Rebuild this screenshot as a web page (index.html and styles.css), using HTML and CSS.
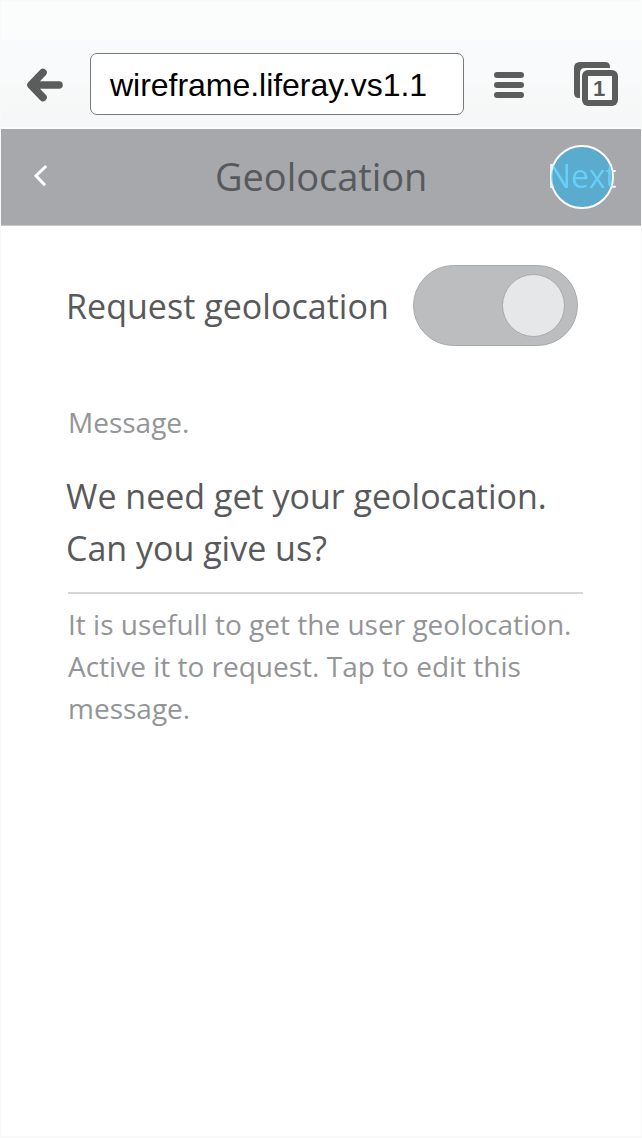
FILE: index.html
```html
<!DOCTYPE html>
<html lang="en">
<head>
<meta charset="utf-8">
<title>Geolocation</title>
<link rel="stylesheet" href="styles.css">
</head>
<body>
<div class="screen">
  <header class="browser-bar">
    <svg class="back" width="38" height="34" viewBox="0 0 38 34"><path d="M18 4.500L6 17L18 29.500M7 17H34" fill="none" stroke="#5b5d5c" stroke-width="7.600" stroke-linecap="round" stroke-linejoin="round"/></svg>
    <div class="address">wireframe.liferay.vs1.1</div>
    <svg class="menu" width="30" height="26" viewBox="0 0 30 26" fill="#5b5d5c"><rect width="30" height="6" rx="3"/><rect y="10" width="30" height="6" rx="3"/><rect y="20" width="30" height="6" rx="3"/></svg>
    <svg class="tabs" width="44" height="44" viewBox="0 0 44 44"><path d="M36 6V5Q36 0 31 0H6Q0 0 0 6V31Q0 36 5 36H6V11Q6 6 11 6Z" fill="#5b5d5c"/><rect x="8" y="8" width="36" height="36" rx="6" fill="#5b5d5c"/><rect x="14" y="14" width="24" height="24" fill="#fafbfb"/><text class="tab-count" x="25" y="34" text-anchor="middle">1</text></svg>
  </header>
  <nav class="title-bar">
    <svg class="chevron" width="16" height="24" viewBox="0 0 16 24"><path d="M14.200 2L4 11.700L13 21.300" fill="none" stroke="#fff" stroke-width="3"/></svg>
    <h1 class="title">Geolocation</h1>
    <div class="next"><span class="tap"></span><span class="next-label">Next</span></div>
  </nav>
  <main class="content">
    <div class="setting">
      <span class="setting-label">Request geolocation</span>
      <span class="toggle"><span class="knob"></span></span>
    </div>
    <div class="caption">Message.</div>
    <div class="message">We need get your geolocation.<br>Can you give us?</div>
    <div class="hint">It is usefull to get the user geolocation.<br>Active it to request. Tap to edit this<br>message.</div>
  </main>
</div>
</body>
</html>
```
FILE: styles.css
```css
* { box-sizing: border-box; }
body { margin: 0; background: #fff; font-family: "Open Sans", sans-serif; }
.screen { width: 642px; height: 1138px; border: 1px solid #f9f9f9; border-bottom-width: 2px; overflow: hidden; white-space: nowrap; }
.browser-bar { display: flex; height: 128px; padding: 52px 0 0 24px; background: linear-gradient(#fafdfc 0, #fafdfc 38px, #f8fafc 39px, #f8fafc 72px, #f7f9f9 90px, #f5f7f8 126px, #fff 127px); }
.back { margin-top: 15px; }
.address { width: 374px; height: 62px; margin-left: 27px; padding-left: 19px; border: 1px solid #77797a; border-radius: 7px; background: #fff; color: #000; font: 32px/62px "Liberation Sans", Arial, sans-serif; letter-spacing: -0.03px; }
.menu { margin: 19px 0 0 30px; }
.tabs { margin: 9px 0 0 50px; }
.tab-count { font: bold 22px "Liberation Sans", Arial, sans-serif; fill: #5b5d5c; }
.title-bar { display: flex; height: 97px; background: #a7a8ac; border-bottom: 1px solid #c9cacc; }
.chevron { margin: 35px 0 0 31px; }
.title { width: 212px; margin: 0 0 0 167px; font-size: 38px; font-weight: 400; line-height: 94px; letter-spacing: -0.05px; color: #58595b; }
.next { position: relative; width: 70px; margin-left: 121px; }
.next-label { position: relative; display: block; height: 96px; text-indent: -1px; font-size: 32px; font-weight: 400; line-height: 94px; letter-spacing: -0.2px; color: transparent; background: radial-gradient(circle at 34px 48px, #68cff8 30px, #eef1f5 31px); -webkit-background-clip: text; background-clip: text; }
.tap { position: absolute; left: 2px; top: 16px; width: 64px; height: 64px; border: 2px solid #fff; border-radius: 50%; background: #5aabce; }
.content { padding: 39px 58px 0 65px; color: #58595b; }
.setting { display: flex; justify-content: space-between; width: 512px; height: 81px; }
.setting-label { font-size: 34px; line-height: 82px; letter-spacing: 0.03px; }
.toggle { display: flex; justify-content: flex-end; width: 165px; height: 81px; padding: 8px 12px; border: 1px solid #a7a9ac; border-radius: 41px; background: #bcbdbf; }
.knob { width: 63px; height: 63px; border: 1px solid #a7a9ac; border-radius: 50%; background: #e6e7e9; }
.caption { margin: 55px 0 0 2px; font-size: 28px; line-height: 42px; color: #939598; }
.message { padding-top: 27px; height: 149px; font-size: 34px; line-height: 52px; }
.hint { margin-left: 2px; padding-top: 9px; border-top: 2px solid #d6d6d8; font-size: 28px; line-height: 42px; color: #939598; }
```
